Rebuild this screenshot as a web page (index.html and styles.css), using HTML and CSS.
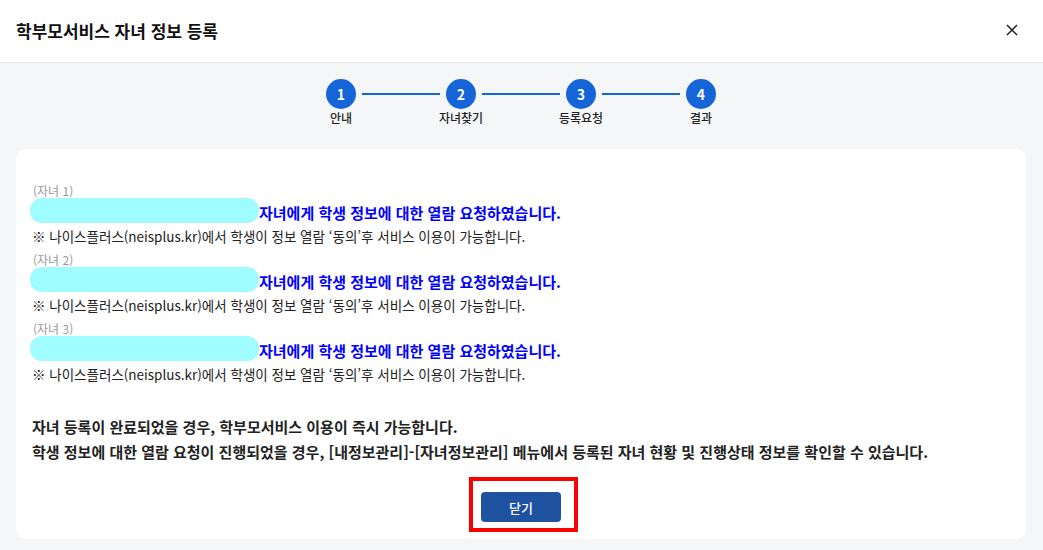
FILE: index.html
```html
<!DOCTYPE html>
<html lang="ko">
<head>
<meta charset="utf-8">
<title>학부모서비스 자녀 정보 등록</title>
<link rel="stylesheet" href="styles.css">
</head>
<body>
<div class="modal">
  <header class="modal-header">
    <h1 class="modal-title">학부모서비스 자녀 정보 등록</h1>
    <button class="close-btn" aria-label="닫기">
      <svg width="12" height="12" viewBox="0 0 12 12"><path d="M1 1 L11 11 M11 1 L1 11" stroke="#222" stroke-width="1.5" fill="none"/></svg>
    </button>
  </header>
  <div class="modal-body">
    <ol class="stepper">
      <li class="step"><span class="step-num">1</span><span class="step-label">안내</span></li>
      <li class="step-line"></li>
      <li class="step"><span class="step-num">2</span><span class="step-label">자녀찾기</span></li>
      <li class="step-line"></li>
      <li class="step"><span class="step-num">3</span><span class="step-label">등록요청</span></li>
      <li class="step-line"></li>
      <li class="step"><span class="step-num">4</span><span class="step-label">결과</span></li>
    </ol>
    <section class="card">
      <div class="child">
        <div class="child-label">(자녀 1)</div>
        <div class="child-row"><span class="mask"></span><span class="child-msg">자녀에게 학생 정보에 대한 열람 요청하였습니다.</span></div>
        <div class="child-note">※ 나이스플러스(neisplus.kr)에서 학생이 정보 열람 ‘동의’후 서비스 이용이 가능합니다.</div>
      </div>
      <div class="child">
        <div class="child-label">(자녀 2)</div>
        <div class="child-row"><span class="mask"></span><span class="child-msg">자녀에게 학생 정보에 대한 열람 요청하였습니다.</span></div>
        <div class="child-note">※ 나이스플러스(neisplus.kr)에서 학생이 정보 열람 ‘동의’후 서비스 이용이 가능합니다.</div>
      </div>
      <div class="child">
        <div class="child-label">(자녀 3)</div>
        <div class="child-row"><span class="mask"></span><span class="child-msg">자녀에게 학생 정보에 대한 열람 요청하였습니다.</span></div>
        <div class="child-note">※ 나이스플러스(neisplus.kr)에서 학생이 정보 열람 ‘동의’후 서비스 이용이 가능합니다.</div>
      </div>
      <div class="summary">
        <p>자녀 등록이 완료되었을 경우, 학부모서비스 이용이 즉시 가능합니다.</p>
        <p>학생 정보에 대한 열람 요청이 진행되었을 경우, [내정보관리]-[자녀정보관리] 메뉴에서 등록된 자녀 현황 및 진행상태 정보를 확인할 수 있습니다.</p>
      </div>
      <div class="actions">
        <div class="highlight"><button class="primary-btn">닫기</button></div>
      </div>
    </section>
  </div>
</div>
</body>
</html>
```
FILE: styles.css
```css
* { box-sizing: border-box; }
html, body { margin: 0; padding: 0; }
body {
  width: 1043px;
  height: 550px;
  overflow: hidden;
  background: #f5f6f8;
  font-family: "Noto Sans CJK KR", "Noto Sans", sans-serif;
  color: #222;
}
.modal { display: flex; flex-direction: column; }
.modal-header {
  height: 63px;
  background: #fff;
  border-bottom: 1px solid #e1e5ea;
  display: flex;
  align-items: center;
  justify-content: space-between;
  padding: 0 25px 2px 16px;
}
.modal-title {
  margin: 0;
  font-size: 17px;
  font-weight: 700;
  color: #111;
}
.close-btn {
  border: 0;
  background: none;
  padding: 0;
  width: 12px;
  height: 12px;
  display: flex;
}
.modal-body { padding: 16px 17px 0 16px; }
.stepper {
  list-style: none;
  margin: 0;
  padding: 0;
  display: flex;
  justify-content: center;
  align-items: flex-start;
  height: 70px;
}
.step {
  width: 30px;
  display: flex;
  flex-direction: column;
  align-items: center;
}
.step-num {
  width: 30px;
  height: 30px;
  border-radius: 50%;
  background: #1565d8;
  color: #fff;
  font-weight: 700;
  font-size: 14px;
  display: flex;
  align-items: center;
  justify-content: center;
}
.step-label {
  white-space: nowrap;
  font-size: 12px;
  font-weight: 500;
  line-height: 18px;
  color: #222;
}
.step-line {
  width: 78px;
  height: 2px;
  background: #1565d8;
  margin: 14px 6px 0;
}
.card {
  background: #fff;
  border-radius: 10px;
  padding: 35px 16px 6px 16px;
  height: 390px;
}
.child { margin-bottom: 7px; }
.child-label {
  font-size: 12px;
  line-height: 14px;
  color: #999;
  padding-left: 1px;
}
.child-row {
  display: flex;
  align-items: center;
  height: 25px;
  margin-bottom: 3px;
  margin-left: -2px;
}
.mask {
  width: 229px;
  height: 25px;
  border-radius: 12px;
  background: #9ffcff;
}
.child-msg {
  color: #0000ff;
  font-weight: 700;
  font-size: 15px;
  margin-top: 3px;
}
.child-note {
  font-size: 13.5px;
  line-height: 20px;
  color: #222;
}
.summary { margin-top: 30px; }
.summary p {
  margin: 0;
  font-size: 15px;
  font-weight: 700;
  line-height: 25px;
  color: #222;
}
.actions {
  display: flex;
  justify-content: center;
  margin-top: 13px;
}
.highlight {
  border: 4px solid #ff0000;
  padding: 11px 13px 6px 8px;
  display: flex;
  margin-left: 5px;
}
.primary-btn {
  width: 80px;
  height: 30px;
  border: 0;
  border-radius: 4px;
  background: #1f52a0;
  color: #fff;
  font-family: inherit;
  font-size: 13px;
  font-weight: 500;
  padding: 0;
}
```
